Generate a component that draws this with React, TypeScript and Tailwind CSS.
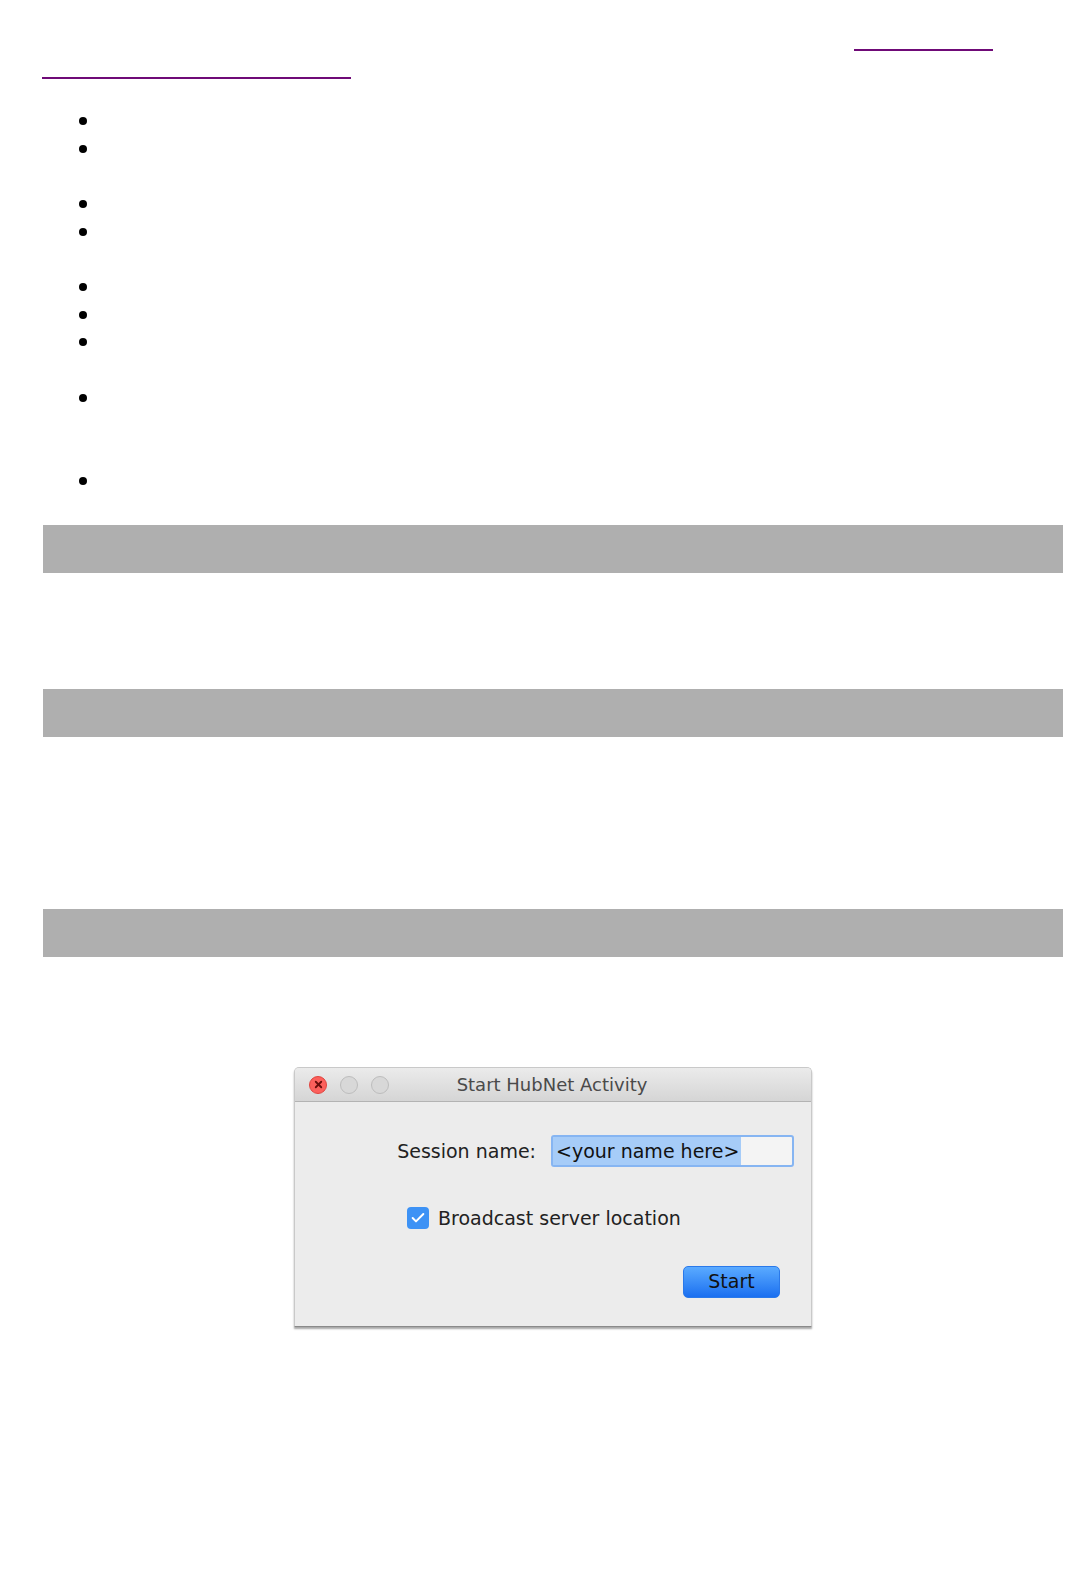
import { Check, X } from "lucide-react";

const items = [28, 55, 28, 55, 28, 27, 56, 83, 28];
const dlgFont = { fontFamily: '"DejaVu Sans", "Liberation Sans", sans-serif' };

function HubNetDialog() {
  return (
    <div
      className="mx-auto w-[518px] overflow-hidden rounded-t-[5px] border border-[#c9c9c9] border-b-[#8a8a8a] bg-[#ececec] shadow-[0_2px_2px_rgba(0,0,0,0.35)]"
      style={dlgFont}
    >
      {/* title bar */}
      <div className="relative flex h-[34px] items-center border-b border-[#b3b3b3] bg-gradient-to-b from-[#ebebeb] to-[#d5d5d5] pl-[14px]">
        <div className="flex items-center gap-[13px]">
          <span className="flex h-[18px] w-[18px] items-center justify-center rounded-full border border-[#e0443e] bg-[#fc605c]">
            <X size={11} strokeWidth={4} className="text-[#6b0e0c]" />
          </span>
          <span className="h-[18px] w-[18px] rounded-full border border-[#bdbdbd] bg-[#d8d8d8]" />
          <span className="h-[18px] w-[18px] rounded-full border border-[#bdbdbd] bg-[#d8d8d8]" />
        </div>
        <div className="absolute inset-0 flex items-center justify-center pr-[2px] text-[18px] text-[#4a4a4a]">
          Start HubNet Activity
        </div>
      </div>

      {/* body */}
      <div className="pt-[33px] pb-[28px]">
        <div className="flex items-center justify-end pr-[17px]">
          <span className="mr-[15px] text-[19px] text-[#222]">Session name:</span>
          <div className="flex h-[32px] w-[243px] items-center rounded-[3px] border-2 border-[#86b5f2] bg-[#f4f4f4] text-[19px] text-[#111]">
            <span className="flex h-full items-center bg-[#a6ccf8] pl-[3px] pr-[2px]">&lt;your name here&gt;</span>
          </div>
        </div>

        <div className="mt-[37px] flex items-center pl-[112px]">
          <span className="flex h-[22px] w-[22px] items-center justify-center rounded-[4px] bg-[#3d92f5]">
            <Check size={16} strokeWidth={3} className="text-white" />
          </span>
          <span className="ml-[9px] text-[19px] text-[#222]">Broadcast server location</span>
        </div>

        <div className="mt-[33px] flex justify-end pr-[31px]">
          <button className="flex h-[32px] w-[97px] items-center justify-center rounded-[5px] border border-[#2a79ea] bg-gradient-to-b from-[#5aaaff] to-[#1a6ff0] text-[19px] text-[#111]">
            Start
          </button>
        </div>
      </div>
    </div>
  );
}

export default function App() {
  return (
    <div className="min-h-[1569px] bg-white pb-[240px]">
      {/* wrapped link, text blank */}
      <div className="flex h-[28px] items-end pt-[23px] box-content">
        <span className="ml-[854px] h-[2px] w-[139px] bg-[#6f0a77]" />
      </div>
      <div className="flex h-[28px] items-end">
        <span className="ml-[42px] h-[2px] w-[309px] bg-[#6f0a77]" />
      </div>

      {/* bullet list */}
      <ul className="mt-[28px]">
        {items.map((h, i) => (
          <li key={i} style={{ height: h }}>
            <div className="ml-[79px] pt-[10px]">
              <span className="block h-[8px] w-[8px] rounded-full bg-black" />
            </div>
          </li>
        ))}
      </ul>

      <div className="ml-[43px] w-[1020px]">
        <div className="mt-[30px] h-[48px] bg-[#afafaf]" />
        <div className="mt-[116px] h-[48px] bg-[#afafaf]" />
        <div className="mt-[172px] h-[48px] bg-[#afafaf]" />

        <div className="mt-[110px]">
          <HubNetDialog />
        </div>
      </div>
    </div>
  );
}
